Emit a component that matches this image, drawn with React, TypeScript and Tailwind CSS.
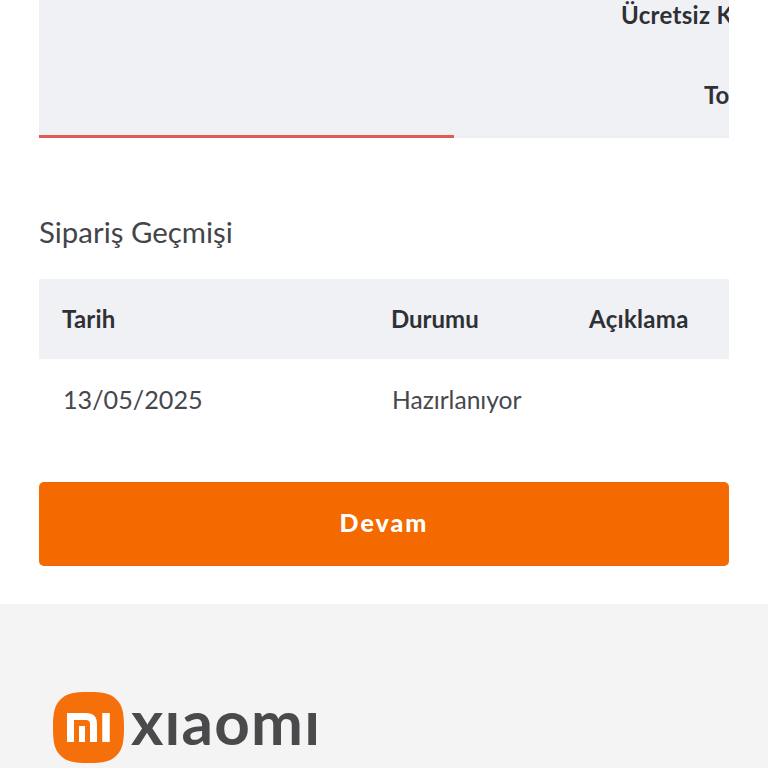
import React from 'react';

const font = { fontFamily: '"Lato", "Open Sans", sans-serif' };

function MiLogo() {
  return (
    <svg width="71" height="71" viewBox="0 0 71 71" className="shrink-0">
      <path
        d="M35.5 0C50 0 58 1.5 63.5 7.5C69.5 13 71 21 71 35.5C71 50 69.5 58 63.5 63.5C58 69.5 50 71 35.5 71C21 71 13 69.5 7.5 63.5C1.5 58 0 50 0 35.5C0 21 1.5 13 7.5 7.5C13 1.5 21 0 35.5 0Z"
        fill="#f56f0a"
      />
      <path d="M17.5 50V24.5H33Q40.5 24.5 40.5 32V50" fill="none" stroke="#fff" strokeWidth="7" />
      <path d="M29 34V50" fill="none" stroke="#fff" strokeWidth="6" />
      <path d="M53 21V50" fill="none" stroke="#fff" strokeWidth="7.5" />
    </svg>
  );
}

export default function App() {
  return (
    <div className="h-[768px] w-[768px] overflow-hidden bg-white text-[#2f3035]" style={font}>
      {/* Totals panel, cut off at the top */}
      <div className="mx-[39px] w-[690px] overflow-hidden bg-[#f0f1f5]">
        <div className="h-[135px] whitespace-nowrap text-[24px] font-bold leading-[30px]">
          <div className="pl-[582px] tracking-[0.3px]">Ücretsiz Kargo</div>
          <div className="mt-[50px] pl-[665px]">Toplam</div>
        </div>
        <div className="h-[3px] bg-[#eeeff3]">
          <div className="h-[3px] w-[415px] bg-[#e25a52]" />
        </div>
      </div>

      {/* Order history */}
      <h2 className="ml-[39px] mt-[77px] text-[29.4px] font-normal leading-[34px] text-[#44454a]">Sipariş Geçmişi</h2>
      <div className="mx-[39px] mt-[30px] w-[690px]">
        <div className="flex h-[80px] items-center bg-[#f0f1f5] pb-[1px] text-[24px] font-bold">
          <div className="w-[352px] pl-[23px] tracking-[0.2px]">Tarih</div>
          <div className="w-[198px]">Durumu</div>
          <div className="tracking-[0.3px]">Açıklama</div>
        </div>
        <div className="flex h-[82px] items-center text-[25.2px] text-[#47484d]">
          <div className="w-[353px] pl-[24px]">13/05/2025</div>
          <div className="text-[24.6px]">Hazırlanıyor</div>
        </div>
      </div>

      <button className="mx-[39px] mt-[41px] block h-[84px] w-[690px] rounded-[5px] bg-[#f56a00] pb-[2px] text-[25px] font-black tracking-[2px] text-white">
        Devam
      </button>

      {/* Footer */}
      <div className="mt-[38px] h-[164px] bg-[#f4f4f5] pl-[53px] pt-[85px]">
        <div className="flex items-center gap-[7px]">
          <MiLogo />
          <span className="pb-[13px] text-[62px] font-bold leading-[64px] tracking-[1.2px] text-[#4a4a4c]">xıaomı</span>
        </div>
      </div>
    </div>
  );
}
